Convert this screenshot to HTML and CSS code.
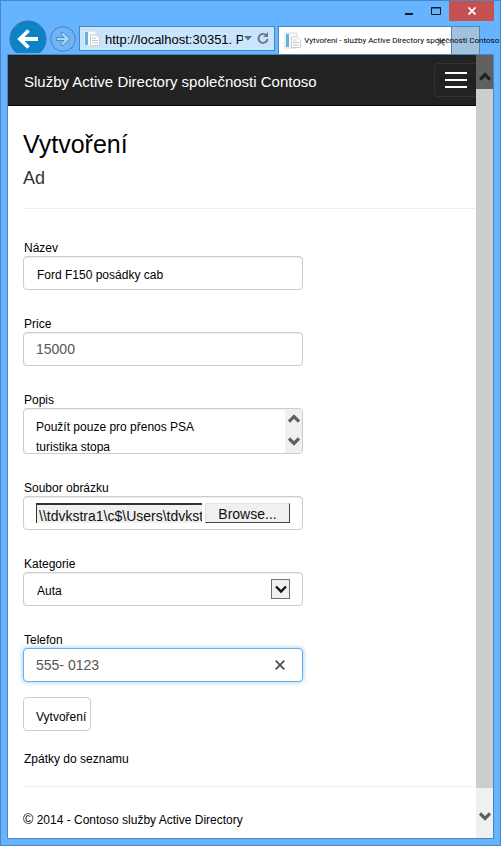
FILE: index.html
```html
<!DOCTYPE html>
<html lang="cs">
<head>
<meta charset="utf-8">
<title>Vytvoření - služby Active Directory společnosti Contoso</title>
<link rel="stylesheet" href="styles.css">
</head>
<body>
<div class="window">
  <header class="chrome">
    <div class="window-buttons">
      <button type="button" class="win-btn" aria-label="Minimalizovat"><svg width="10" height="10" viewBox="0 0 10 10"><path d="M1 8h8" stroke="#1a1a1a" stroke-width="2"/></svg></button>
      <button type="button" class="win-btn" aria-label="Maximalizovat"><svg width="10" height="10" viewBox="0 0 10 10"><path d="M.5 1.500h9v7h-9zM0 2h10" fill="none" stroke="#1a1a1a"/></svg></button>
      <button type="button" class="win-btn win-close" aria-label="Zavřít"><svg width="8" height="8" viewBox="0 0 8 8"><path d="M.5.5l7 7M7.500.5l-7 7" stroke="#fff" stroke-width="1.800"/></svg></button>
    </div>
    <div class="toolbar">
      <button type="button" class="nav-btn" aria-label="Zpět"><svg width="38" height="38" viewBox="0 0 38 38"><circle cx="19" cy="19" r="18" fill="#0b83c4" stroke="#3a6fa5"/><path d="M29 19H11M19.500 10.500L11 19l8.500 8.500" fill="none" stroke="#fff" stroke-width="3.800"/></svg></button>
      <button type="button" class="nav-btn forward" aria-label="Vpřed"><svg width="26" height="26" viewBox="0 0 26 26"><circle cx="13" cy="13" r="12.300" fill="#70b4f6" stroke="#4583bd"/><path d="M6.500 11.500h7.500L11 8.500V6.800h2.500L20 13l-6.500 6.200H11v-1.700l3-3H6.500z" fill="#a9d4fb" stroke="#4583bd" stroke-width=".9"/></svg></button>
      <div class="address">
        <svg width="17" height="17" viewBox="0 0 17 17"><path d="M1 1h12v15H1z" fill="#f4f8fc" stroke="#d3dce5"/><path d="M2 2h3v13H2z" fill="#63b3df"/><path d="M7.500 5h6l3 3v7.500h-9z" fill="#fff" stroke="#c8ced5"/><path d="M9 8h4M9 10.500h6M9 13h6" stroke="#c4c4c4"/></svg>
        <input type="text" class="url" aria-label="Adresa" value="http://localhost:30351. P">
        <svg width="8" height="5" viewBox="0 0 8 5"><path d="M0 0h8L4 4.500z" fill="#57718c"/></svg>
        <svg class="reload" width="12" height="13" viewBox="0 0 12 13"><path d="M9.500 3.500A4.500 4.500 0 1 0 10.500 7" fill="none" stroke="#6c7783" stroke-width="1.900"/><path d="M11 0v5H6z" fill="#6c7783"/></svg>
      </div>
      <div class="tab">
        <svg width="17" height="17" viewBox="0 0 17 17"><path d="M1 1h12v15H1z" fill="#f7f9fc" stroke="#d6dde5"/><path d="M2 2h3v13H2z" fill="#63b3df"/><path d="M7.500 5h6l3 3v7.500h-9z" fill="#fff" stroke="#c8ced5"/><path d="M9 8h4M9 10.500h6M9 13h6" stroke="#c4c4c4"/></svg>
        <span class="tab-title">Vytvoření - služby Active Directory společnosti Contoso</span>
        <svg class="tab-close" width="8" height="8" viewBox="0 0 8 8"><path d="M.5.5l7 7M7.500.5l-7 7" stroke="#999" stroke-width="1.800"/></svg>
      </div>
      <button type="button" class="new-tab" aria-label="Nová karta"></button>
    </div>
  </header>

  <div class="viewport">
    <div class="page">
      <nav class="navbar">
        <a href="#" class="brand">Služby Active Directory společnosti Contoso</a>
        <button type="button" class="toggle" aria-label="Nabídka"><span></span><span></span><span></span></button>
      </nav>
      <main class="content">
        <h2>Vytvoření</h2>
        <h4>Ad</h4>
        <hr>
        <form>
          <div class="group">
            <label for="title">Název</label>
            <input id="title" class="control small" type="text" value="Ford F150 posádky cab">
          </div>
          <div class="group">
            <label for="price">Price</label>
            <input id="price" class="control" type="text" value="15000">
          </div>
          <div class="group">
            <label for="desc">Popis</label>
            <div class="area">
              <textarea id="desc">Použít pouze pro přenos PSA
turistika stopa</textarea>
              <div class="area-scroll">
                <svg width="12" height="9" viewBox="0 0 12 9"><path d="M1 7.500l5-5 5 5" fill="none" stroke="#606060" stroke-width="3.200"/></svg>
                <svg width="12" height="9" viewBox="0 0 12 9"><path d="M1 1.500l5 5 5-5" fill="none" stroke="#606060" stroke-width="3.200"/></svg>
              </div>
            </div>
          </div>
          <div class="group">
            <label for="file">Soubor obrázku</label>
            <div class="control file">
              <input id="file" type="text" readonly value="\\tdvkstra1\c$\Users\tdvkstra">
              <button type="button">Browse...</button>
            </div>
          </div>
          <div class="group">
            <label for="category">Kategorie</label>
            <div class="picker">
              <select id="category" class="control small"><option>Auta</option></select>
              <span class="picker-arrow"><svg width="12" height="9" viewBox="0 0 12 9"><path d="M1 1.500l5 5 5-5" fill="none" stroke="#111" stroke-width="2.400"/></svg></span>
            </div>
          </div>
          <div class="group last">
            <label for="phone">Telefon</label>
            <div class="control phone">
              <input id="phone" type="text" value="555- 0123">
              <button type="button" aria-label="Vymazat"><svg width="10" height="10" viewBox="0 0 10 10"><path d="M.7.7l8.600 8.600M9.300.7L.7 9.300" stroke="#505050" stroke-width="1.800"/></svg></button>
            </div>
          </div>
          <button type="button" class="submit">Vytvoření</button>
        </form>
        <a href="#" class="back">Zpátky do seznamu</a>
        <hr>
        <footer><span class="copy">©</span> 2014 - Contoso služby Active Directory</footer>
      </main>
    </div>
    <div class="scrollbar">
      <div class="scroll-up"><svg width="12" height="9" viewBox="0 0 12 9"><path d="M1 7.500l5-5 5 5" fill="none" stroke="#222" stroke-width="3.200"/></svg></div>
      <div class="thumb"></div>
      <div class="scroll-down"><svg width="12" height="9" viewBox="0 0 12 9"><path d="M1 1.500l5 5 5-5" fill="none" stroke="#606060" stroke-width="3.200"/></svg></div>
    </div>
  </div>
</div>
</body>
</html>
```
FILE: styles.css
```css
* { box-sizing: border-box; }

body {
  margin: 0;
  font: 12px/20px "Liberation Sans", Arial, sans-serif;
  color: #000;
}

button, input, select, textarea { font: inherit; color: inherit; margin: 0; }
svg { display: block; flex: none; }
a { color: inherit; text-decoration: none; }

.window {
  display: flex;
  flex-direction: column;
  min-height: 100vh;
  padding: 0 6px 6px;
  background: #66b3ff;
  border: 1px solid #4a86c0;
}

/* Browser frame */
.window-buttons { display: flex; justify-content: flex-end; height: 20px; }
.win-btn {
  display: flex;
  align-items: center;
  justify-content: center;
  width: 27px;
  padding: 0;
  border: 0;
  background: none;
}
.win-close { width: 45px; background: #c75050; }

.toolbar { display: flex; height: 33px; padding: 5px 14px 0 0; }
.nav-btn {
  flex: none;
  height: 33px;
  margin: -6px 0 0 2px;
  padding: 0;
  border: 0;
  background: none;
  overflow: hidden;
}
.nav-btn.forward { margin: 0 3px 0 3px; height: 26px; }
.address {
  display: flex;
  flex: 198 1 0;
  align-items: center;
  gap: 5px;
  min-width: 0;
  height: 25px;
  padding: 0 5px 0 3px;
  background: #c9e4fd;
  border: 1px solid #4a86c0;
}
.url {
  flex: 1;
  min-width: 0;
  margin-right: -4px;
  padding: 3px 0 0;
  border: 0;
  background: none;
  font-size: 13px;
}
.tab {
  position: relative;
  display: flex;
  flex: 171 1 0;
  align-items: center;
  gap: 3px;
  min-width: 0;
  height: 28px;
  margin-left: 3px;
  padding: 0 6px 0 5px;
  background: #fff;
  border: 1px solid #4a86c0;
  border-bottom: 0;
}
.tab-title {
  position: relative;
  z-index: 1;
  font-family: Roboto, "Liberation Sans", sans-serif;
  font-size: 8px;
  white-space: nowrap;
}
.tab-close { position: absolute; right: 6px; top: 11px; }
.new-tab {
  flex: none;
  width: 28px;
  height: 28px;
  padding: 0;
  background: #a2c1dd;
  border: 1px solid #4a86c0;
  border-width: 1px 1px 0 0;
}

/* Page area */
.viewport {
  display: flex;
  flex: 1;
  background: #fff;
  border: 1px solid #4a86c0;
}
.page { flex: 1; min-width: 0; }
.navbar {
  display: flex;
  align-items: center;
  justify-content: space-between;
  height: 51px;
  padding: 0 0 0 16px;
  background: #222;
  border-bottom: 1px solid #080808;
}
.brand { font-size: 15px; color: #fff; padding-top: 3px; white-space: nowrap; }
.toggle {
  display: flex;
  flex-direction: column;
  flex: none;
  align-items: center;
  justify-content: center;
  gap: 5px;
  width: 44px;
  height: 34px;
  margin-right: -2px;
  padding: 0;
  background: none;
  border: 1px solid #333;
  border-radius: 4px;
}
.toggle span { width: 22px; height: 2px; background: #fff; }

.content { padding: 20px 0 0 15px; }
h2, h4 { margin: 0; font-weight: 400; }
h2 { font-size: 25px; line-height: 36px; }
h4 { font-size: 18px; line-height: 32px; color: #333; }
hr { height: 1px; margin: 14px 0 0; border: 0; background: #eee; }
form { padding-top: 27px; }

.group { max-width: 280px; margin-bottom: 22px; }
.group.last { margin-bottom: 15px; }
label { display: block; height: 20px; padding: 2px 0 0 1px; }

.control, .area {
  display: block;
  width: 100%;
  height: 34px;
  padding: 0 12px;
  background: #fff;
  border: 1px solid #ccc;
  border-radius: 4px;
  box-shadow: inset 0 1px 1px rgba(0, 0, 0, .08);
  font-size: 14px;
  color: #555;
}
.control.small { padding: 3px 13px 0; font-size: 12px; color: #000; }

.area { display: flex; height: 46px; padding: 0; overflow: hidden; }
.area textarea {
  flex: 1;
  min-width: 0;
  padding: 8px 0 0 12px;
  border: 0;
  background: none;
  resize: none;
  overflow: hidden;
  font-size: 12px;
  color: #000;
}
.area-scroll {
  display: flex;
  flex-direction: column;
  justify-content: space-between;
  align-items: center;
  width: 17px;
  padding: 5px 0 7px;
  background: #f0f0f0;
}

.file { display: flex; align-items: center; gap: 3px; color: #111; }
.file input {
  flex: 1;
  min-width: 0;
  height: 20px;
  padding: 4px 0 0 2px;
  background: #f0f0f0;
  border: 0;
  border-top: 2px solid #333;
  border-left: 1px solid #333;
}
.file button {
  width: 85px;
  height: 20px;
  padding: 1px 0 0;
  line-height: 18px;
  background: #f0f0f0;
  border: 1px solid #e3e3e3;
  border-right-color: #444;
  border-bottom-color: #444;
}

.picker { position: relative; }
.picker select { appearance: none; }
.picker-arrow {
  position: absolute;
  top: 7px;
  right: 13px;
  display: flex;
  align-items: center;
  justify-content: center;
  width: 19px;
  height: 20px;
  background: #f0f0f0;
  border: 1px solid #707070;
  pointer-events: none;
}

.phone {
  display: flex;
  align-items: center;
  padding-right: 17px;
  border-color: #66afe9;
  box-shadow: 0 0 5px rgba(102, 175, 233, .7);
}
.phone input { flex: 1; min-width: 0; padding: 0; border: 0; background: none; outline: 0; }
.phone button { padding: 0; border: 0; background: none; }

.submit {
  display: block;
  height: 34px;
  padding: 5px 4px 0 12px;
  background: #fff;
  border: 1px solid #ccc;
  border-radius: 4px;
}
.back { display: block; margin: 18px 0 17px 1px; }
footer { padding-top: 22px; }
.copy { font-size: 14px; }

/* Scrollbar */
.scrollbar { display: flex; flex-direction: column; width: 17px; background: #f0f0f0; }
.scroll-up, .scroll-down { display: flex; justify-content: center; }
.scroll-up { height: 34px; padding-top: 17px; background: #606060; }
.thumb { flex: 1; background: #cdcdcd; }
.scroll-down { height: 50px; padding-top: 24px; }
```
